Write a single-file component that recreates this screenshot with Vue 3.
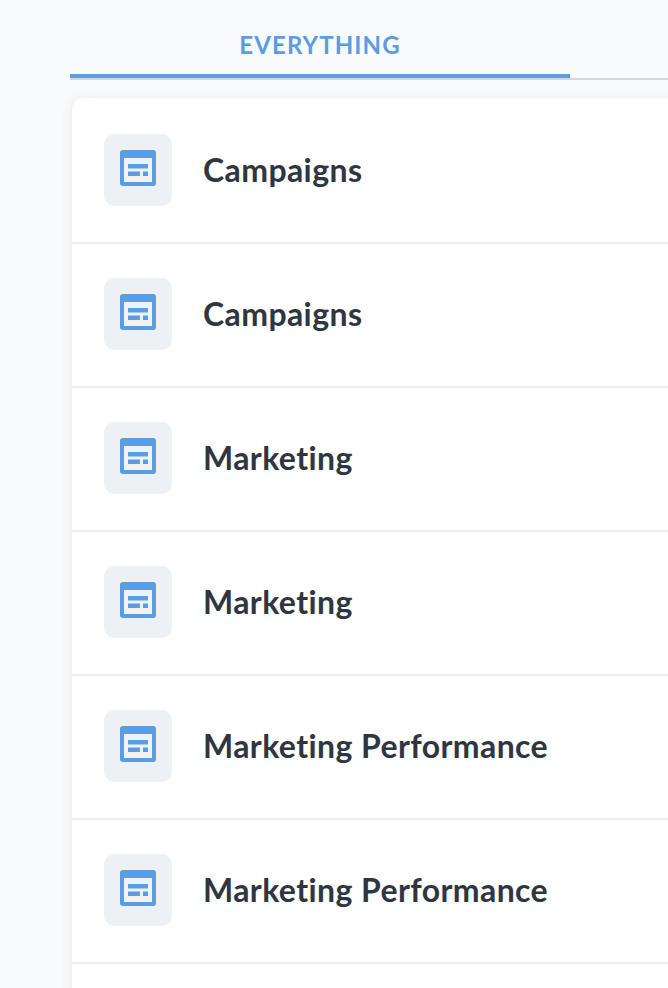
<template>
  <div class="page">
    <div class="tabs">
      <div class="tab">EVERYTHING</div>
    </div>
    <div class="card">
      <div v-for="(item, i) in items" :key="i" class="row">
        <div class="icon-box">
          <svg class="icon" width="36" height="36" viewBox="0 0 36 36">
            <path d="M3 0h30a3 3 0 0 1 3 3v30a3 3 0 0 1-3 3H3a3 3 0 0 1-3-3V3a3 3 0 0 1 3-3z" fill="#5c9ce0" />
            <rect x="4" y="8" width="28" height="24" fill="#eef3f9" />
            <rect x="8" y="14" width="20" height="4.5" fill="#5c9ce0" />
            <rect x="8" y="21.5" width="12" height="4.5" fill="#5c9ce0" />
            <rect x="23" y="21.5" width="5" height="4.5" fill="#5c9ce0" />
          </svg>
        </div>
        <span class="name">{{ item }}</span>
      </div>
    </div>
  </div>
</template>

<script setup>
const items = [
  'Campaigns',
  'Campaigns',
  'Marketing',
  'Marketing',
  'Marketing Performance',
  'Marketing Performance',
  ''
]
</script>

<style>
html,
body {
  margin: 0;
  overflow: hidden;
  background: #f9fafc;
}
</style>

<style scoped>
.page {
  height: 988px;
  overflow: hidden;
  padding-left: 70px;
  font-family: Lato, "Liberation Sans", sans-serif;
}

.tabs {
  height: 80px;
  box-sizing: border-box;
  border-bottom: 2px solid #d5d8dc;
}

.tab {
  width: 500px;
  height: 78px;
  box-sizing: border-box;
  border-bottom: 4px solid #5c9ce0;
  padding-top: 30px;
  text-align: center;
  color: #5c9ce0;
  font-size: 24px;
  line-height: 30px;
  font-weight: 700;
  letter-spacing: 1.1px;
}

.card {
  margin: 18px -20px 0 2px;
  padding-top: 2px;
  background: #fff;
  border-radius: 10px;
  box-shadow: 0 0 0 1px #f0f1f3, 0 2px 14px rgba(40, 50, 70, 0.09);
}

.row {
  height: 144px;
  box-sizing: border-box;
  display: flex;
  align-items: center;
  gap: 31px;
  padding: 0 0 2px 32px;
  border-bottom: 2px solid #edf1f4;
}

.icon-box {
  width: 68px;
  height: 72px;
  display: flex;
  align-items: center;
  justify-content: center;
  background: #edf1f5;
  border-radius: 10px;
}

.icon {
  margin-bottom: 4px;
}

.name {
  margin-bottom: 2px;
  color: #2f3640;
  font-size: 32px;
  font-weight: 700;
  letter-spacing: 0.4px;
}
</style>
